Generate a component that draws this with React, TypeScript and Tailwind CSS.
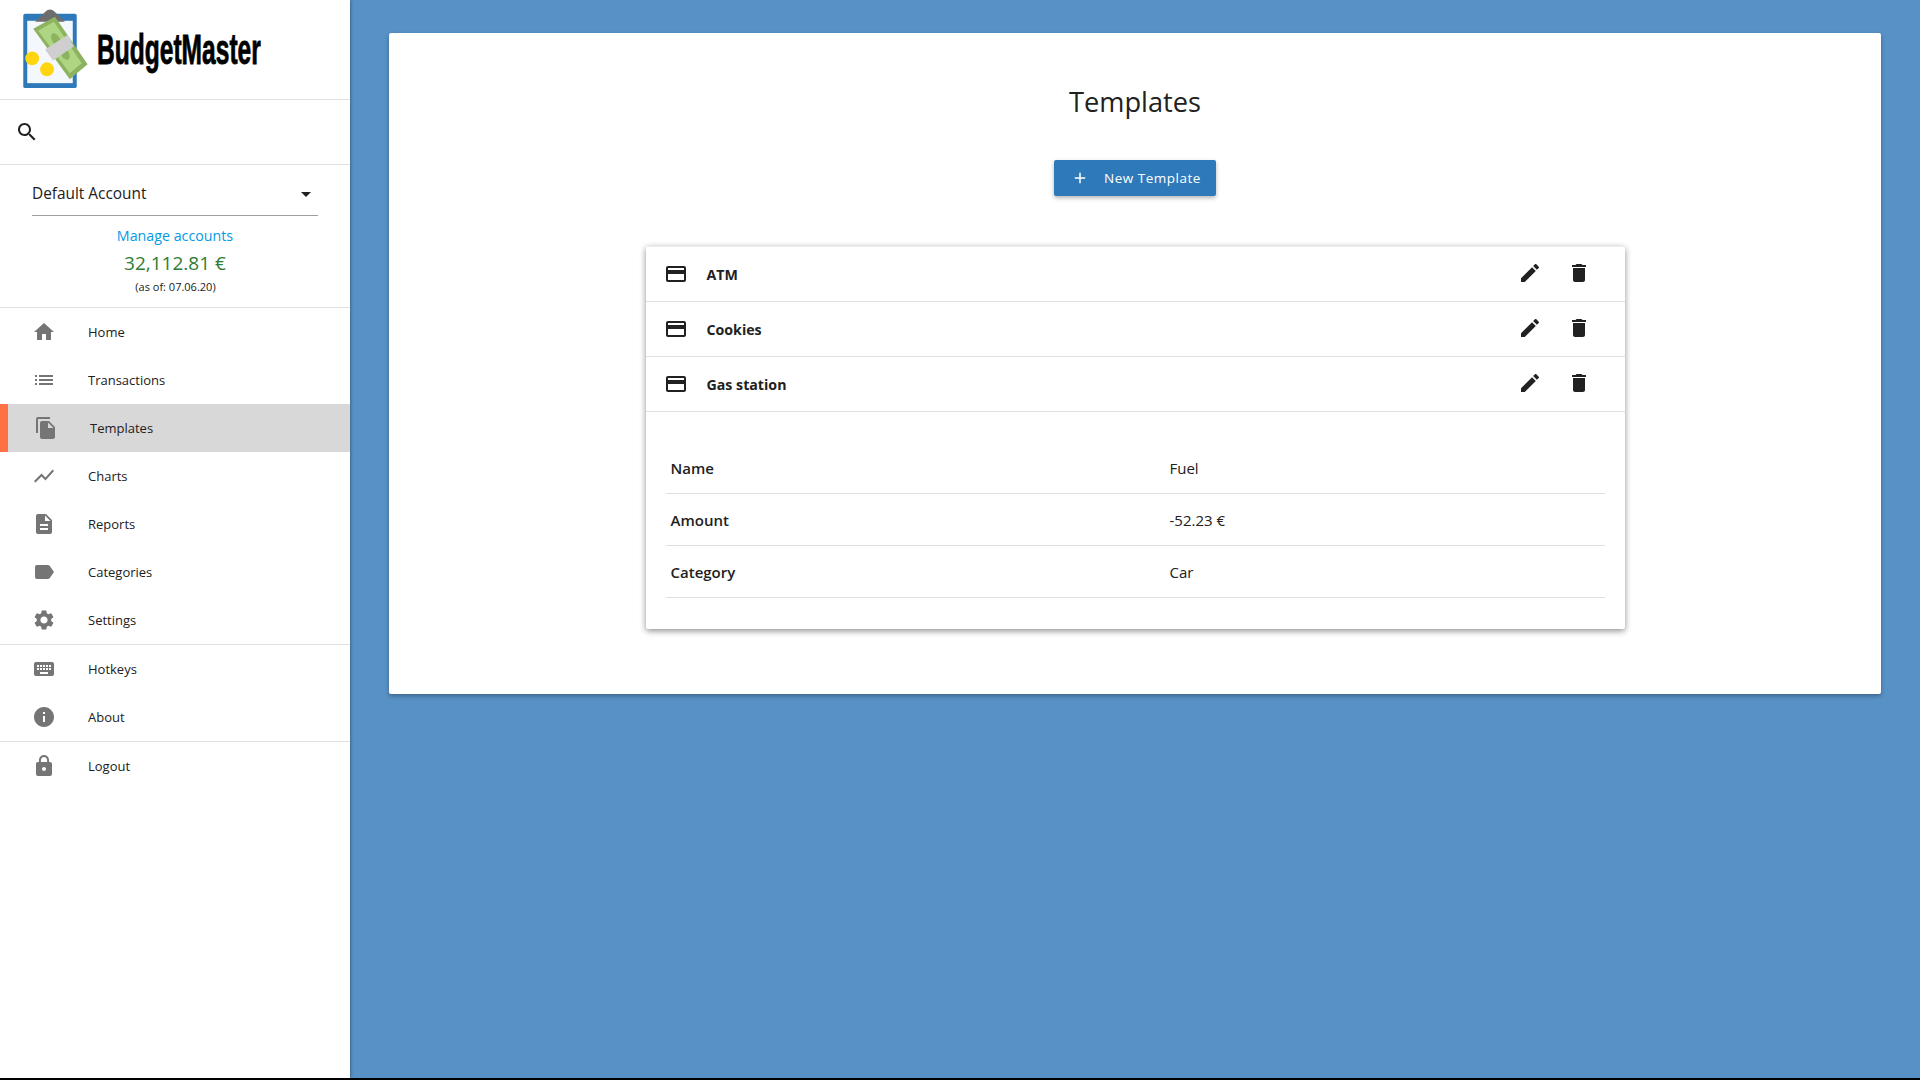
import { FC } from 'react'

const paths: Record<string, string> = {
  home: 'M10 20v-6h4v6h5v-8h3L12 3 2 12h3v8z',
  list: 'M3 13h2v-2H3v2zm0 4h2v-2H3v2zm0-8h2V7H3v2zm4 4h14v-2H7v2zm0 4h14v-2H7v2zM7 7v2h14V7H7z',
  copy: 'M16 1H4c-1.1 0-2 .9-2 2v14h2V3h12V1zm-1 4l6 6v10c0 1.1-.9 2-2 2H7.99C6.89 23 6 22.1 6 21l.01-14c0-1.1.89-2 1.99-2h7zm-1 7h5.5L14 6.5V12z',
  chart: 'M3.5 18.49l6-6.01 4 4L22 6.92l-1.41-1.41-7.09 7.97-4-4L2 16.99z',
  description: 'M14 2H6c-1.1 0-1.99.9-1.99 2L4 20c0 1.1.89 2 1.99 2H18c1.1 0 2-.9 2-2V8l-6-6zm2 16H8v-2h8v2zm0-4H8v-2h8v2zm-3-5V3.5L18.5 9H13z',
  label: 'M17.63 5.84C17.27 5.33 16.67 5 16 5L5 5.01C3.9 5.01 3 5.9 3 7v10c0 1.1.9 1.99 2 1.99L16 19c.67 0 1.27-.33 1.63-.84L22 12l-4.37-6.16z',
  settings: 'M19.14 12.94c.04-.3.06-.61.06-.94 0-.32-.02-.64-.07-.94l2.03-1.58c.18-.14.23-.41.12-.61l-1.92-3.32c-.12-.22-.37-.29-.59-.22l-2.39.96c-.5-.38-1.03-.7-1.62-.94l-.36-2.54c-.04-.24-.24-.41-.48-.41h-3.84c-.24 0-.43.17-.47.41l-.36 2.54c-.59.24-1.13.57-1.62.94l-2.39-.96c-.22-.08-.47 0-.59.22L2.74 8.87c-.12.21-.08.47.12.61l2.03 1.58c-.05.3-.09.63-.09.94s.02.64.07.94l-2.03 1.58c-.18.14-.23.41-.12.61l1.92 3.32c.12.22.37.29.59.22l2.39-.96c.5.38 1.03.7 1.62.94l.36 2.54c.05.24.24.41.48.41h3.84c.24 0 .44-.17.47-.41l.36-2.54c.59-.24 1.13-.56 1.62-.94l2.39.96c.22.08.47 0 .59-.22l1.92-3.32c.12-.22.07-.47-.12-.61l-2.01-1.58zM12 15.6c-1.98 0-3.6-1.62-3.6-3.6s1.62-3.6 3.6-3.6 3.6 1.62 3.6 3.6-1.62 3.6-3.6 3.6z',
  keyboard: 'M20 5H4c-1.1 0-1.99.9-1.99 2L2 17c0 1.1.9 2 2 2h16c1.1 0 2-.9 2-2V7c0-1.1-.9-2-2-2zm-9 3h2v2h-2V8zm0 3h2v2h-2v-2zM8 8h2v2H8V8zm0 3h2v2H8v-2zm-1 2H5v-2h2v2zm0-3H5V8h2v2zm9 7H8v-2h8v2zm0-4h-2v-2h2v2zm0-3h-2V8h2v2zm3 3h-2v-2h2v2zm0-3h-2V8h2v2z',
  info: 'M12 2C6.48 2 2 6.48 2 12s4.48 10 10 10 10-4.48 10-10S17.52 2 12 2zm1 15h-2v-6h2v6zm0-8h-2V7h2v2z',
  lock: 'M18 8h-1V6c0-2.76-2.24-5-5-5S7 3.24 7 6v2H6c-1.1 0-2 .9-2 2v10c0 1.1.9 2 2 2h12c1.1 0 2-.9 2-2V10c0-1.1-.9-2-2-2zm-6 9c-1.1 0-2-.9-2-2s.9-2 2-2 2 .9 2 2-.9 2-2 2zm3.1-9H8.9V6c0-1.71 1.39-3.1 3.1-3.1 1.71 0 3.1 1.39 3.1 3.1v2z',
  search: 'M15.5 14h-.79l-.28-.27C15.41 12.59 16 11.11 16 9.5 16 5.91 13.09 3 9.5 3S3 5.91 3 9.5 5.91 16 9.5 16c1.61 0 3.09-.59 4.23-1.57l.27.28v.79l5 4.99L20.49 19l-4.99-5zm-6 0C7.01 14 5 11.99 5 9.5S7.01 5 9.5 5 14 7.01 14 9.5 11.99 14 9.5 14z',
  card: 'M20 4H4c-1.11 0-1.99.89-1.99 2L2 18c0 1.11.89 2 2 2h16c1.11 0 2-.89 2-2V6c0-1.11-.89-2-2-2zm0 14H4v-6h16v6zm0-10H4V6h16v2z',
  edit: 'M3 17.25V21h3.75L17.81 9.94l-3.75-3.75L3 17.25zM20.71 7.04c.39-.39.39-1.02 0-1.41l-2.34-2.34c-.39-.39-1.02-.39-1.41 0l-1.83 1.83 3.75 3.75 1.83-1.83z',
  trash: 'M6 19c0 1.1.9 2 2 2h8c1.1 0 2-.9 2-2V7H6v12zM19 4h-3.5l-1-1h-5l-1 1H5v2h14V4z',
  add: 'M19 13h-6v6h-2v-6H5v-2h6V5h2v6h6v2z',
  arrow: 'M7 10l5 5 5-5z',
}

const Icon: FC<{ name: string; className?: string }> = ({ name, className }) => (
  <svg viewBox="0 0 24 24" fill="currentColor" className={className}>
    <path d={paths[name]} />
  </svg>
)

const Logo = () => (
  <svg viewBox="0 0 100 100" className="w-[100px] h-[99px] shrink-0">
    <rect x="23" y="14" width="54" height="75" rx="2" fill="#2e79b9" />
    <rect x="27" y="21" width="46" height="63" fill="#f4f8fc" />
    <path d="M35 22 L45 12 Q50 7 55 12 L65 22 Z" fill="#6d6d6d" />
    <path d="M33 29 L55 17 L88 65 L70 80 Z" fill="#8db360" />
    <path d="M38 31 L54 22 L82 64 L70 74 Z" fill="#aed581" />
    <ellipse cx="56" cy="40" rx="4" ry="7" fill="#8db360" transform="rotate(-30 56 40)" />
    <ellipse cx="65" cy="54" rx="4" ry="7" fill="#8db360" transform="rotate(-30 65 54)" />
    <path d="M45 50 L68 35 L74 47 L53 61 Z" fill="#cfcfcf" />
    <circle cx="32" cy="59" r="7" fill="#ffd50f" />
    <circle cx="47" cy="70" r="7" fill="#ffd50f" />
  </svg>
)

const NavItem: FC<{ icon: string; label: string }> = ({ icon, label }) => (
  <div className="h-12 flex items-center pl-8">
    <Icon name={icon} className="w-6 h-6 text-[#757575]" />
    <span className="ml-8 mt-[1px] text-[13px] text-[#212121] font-medium">{label}</span>
  </div>
)

const TemplateRow: FC<{ label: string }> = ({ label }) => (
  <div className="h-[55px] flex items-center border-b border-[#e0e0e0] pl-[18px]">
    <Icon name="card" className="w-6 h-6 text-[#212121]" />
    <span className="ml-[19px] mt-[2px] text-[14.2px] font-bold text-[#212121]">{label}</span>
    <Icon name="edit" className="w-6 h-6 ml-auto text-[#212121] -mt-[2px]" />
    <Icon name="trash" className="w-6 h-6 ml-[25px] mr-[34px] text-[#212121] -mt-[2px]" />
  </div>
)

const DetailRow: FC<{ label: string; value: string }> = ({ label, value }) => (
  <div className="h-[52px] pt-[2px] flex items-center border-b border-[#e0e0e0] px-[5px] text-[15px] text-[#212121]">
    <span className="w-[499px] font-semibold">{label}</span>
    <span>{value}</span>
  </div>
)

export default function App() {
  return (
    <div className="h-[1080px] bg-black font-['Open_Sans',sans-serif] overflow-hidden">
      <div className="h-[1078px] flex bg-[#5891c6]">
        <aside className="w-[350px] shrink-0 bg-white shadow-[1px_0_3px_rgba(0,0,0,0.3)]">
          <div className="h-[100px] flex items-center border-b border-[#e0e0e0] overflow-hidden">
            <Logo />
            <span className="-ml-[3px] origin-left scale-x-[0.585] font-['Liberation_Sans',sans-serif] font-bold text-[42px] text-black [-webkit-text-stroke:0.8px_black]">
              BudgetMaster
            </span>
          </div>
          <div className="h-[65px] flex items-center border-b border-[#e0e0e0] pl-[15px]">
            <Icon name="search" className="w-6 h-6 text-[#212121]" />
          </div>
          <div className="h-[143px] border-b border-[#e0e0e0] flex flex-col items-center">
            <div className="w-[286px] h-[51px] pt-[8px] flex items-center justify-between border-b border-[#9e9e9e] text-[15.4px] text-[#212121]">
              <span>Default Account</span>
              <Icon name="arrow" className="w-6 h-6" />
            </div>
            <span className="mt-[10px] text-[14.25px] leading-5 text-[#039be5]">Manage accounts</span>
            <span className="mt-[3px] text-[19px] leading-7 text-[#2e7d32]">32,112.81 €</span>
            <span className="mt-[2px] ml-[1px] text-[11px] leading-4 text-[#212121]">(as of: 07.06.20)</span>
          </div>
          <NavItem icon="home" label="Home" />
          <NavItem icon="list" label="Transactions" />
          <div className="h-12 flex items-center bg-[#d8d8d8] border-l-8 border-[#ff7043] pl-[26px]">
            <Icon name="copy" className="w-6 h-6 text-[#757575]" />
            <span className="ml-8 mt-[1px] text-[13px] text-[#212121] font-medium">Templates</span>
          </div>
          <NavItem icon="chart" label="Charts" />
          <NavItem icon="description" label="Reports" />
          <NavItem icon="label" label="Categories" />
          <NavItem icon="settings" label="Settings" />
          <div className="border-t border-[#e0e0e0]">
            <NavItem icon="keyboard" label="Hotkeys" />
            <NavItem icon="info" label="About" />
          </div>
          <div className="border-t border-[#e0e0e0]">
            <NavItem icon="lock" label="Logout" />
          </div>
        </aside>
        <main className="flex-1 px-[39px] pt-[33px]">
          <div className="h-[661px] bg-white rounded-[2px] shadow-[0_2px_4px_rgba(0,0,0,0.3)] flex flex-col items-center pt-[51px]">
            <h1 className="h-9 leading-9 text-[27.2px] text-[#212121]">Templates</h1>
            <button className="mt-[40px] w-[162px] h-9 flex items-center pl-[17px] rounded-[2px] bg-[#2e79b9] text-white text-[13.5px] font-medium tracking-[0.5px] shadow-[0_2px_4px_rgba(0,0,0,0.3)]">
              <Icon name="add" className="w-[18px] h-[18px]" />
              <span className="ml-[15px] mt-[1px]">New Template</span>
            </button>
            <div className="mt-[50px] w-[979px] h-[383px] rounded-[2px] shadow-[0_2px_6px_rgba(0,0,0,0.45)] border-t border-[#eeeeee]">
              <TemplateRow label="ATM" />
              <TemplateRow label="Cookies" />
              <TemplateRow label="Gas station" />
              <div className="mx-[20px] pt-[30px]">
                <DetailRow label="Name" value="Fuel" />
                <DetailRow label="Amount" value="-52.23 €" />
                <DetailRow label="Category" value="Car" />
              </div>
            </div>
          </div>
        </main>
      </div>
    </div>
  )
}
